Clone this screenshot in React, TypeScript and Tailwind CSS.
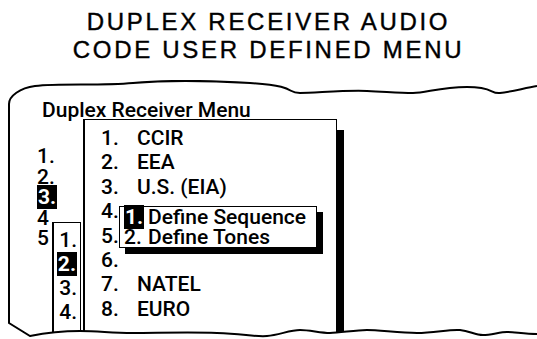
import React from 'react';

const mainItems = ['CCIR', 'EEA', 'U.S. (EIA)', '', '', '', 'NATEL', 'EURO'];
const rootItems = ['1.', '2.', '3.', '4', '5'];
const codeItems = ['1.', '2.', '3.', '4.'];
const defineItems = ['Define Sequence', 'Define Tones'];

const Num: React.FC<{ label: string; active?: boolean }> = ({ label, active }) => (
    <span className={active ? 'bg-black text-white px-[1px] font-bold' : ''}>{label}</span>
);

const App: React.FC = () => {
    return (
        <main className="w-[537px] h-[339px] bg-white text-black overflow-hidden">
            <div className="h-[80px] pt-[8px] flex flex-col items-center font-['Liberation_Sans',Arial,sans-serif] text-[24px] leading-[28px] tracking-[2.7px] [-webkit-text-stroke:0.4px_#000]">
                <span>DUPLEX RECEIVER AUDIO</span>
                <span>CODE USER DEFINED MENU</span>
            </div>

            <div className="relative h-[259px] font-['Roboto',sans-serif] font-medium text-[21px]">
                {/* root window */}
                <div className="absolute left-[37px] top-[18px] flex flex-col">
                    <div className="pl-[5px] leading-[24px]">Duplex Receiver Menu</div>
                    <div className="mt-[24px] flex flex-col leading-[20.5px]">
                        {rootItems.map((n, i) => (
                            <div key={n}>
                                <Num label={n} active={i === 2} />
                            </div>
                        ))}
                    </div>
                </div>

                {/* code list */}
                <div className="absolute left-[83px] top-[39px] w-[254px] h-[240px] bg-white border border-l-2 border-black shadow-[7px_11px_0_#000] pt-[6px] pl-[16px] leading-[24.4px]">
                    {mainItems.map((label, i) => (
                        <div key={i} className="flex">
                            <span className="w-[36px]">{i + 1}.</span>
                            <span>{label}</span>
                        </div>
                    ))}
                </div>

                {/* user defined submenu */}
                <div className="absolute left-[119px] top-[126px] w-[198px] bg-white border border-black shadow-[6px_6px_0_#000] pl-[4px] leading-[20px]">
                    {defineItems.map((label, i) => (
                        <div key={label} className="flex">
                            <span className="w-[24px]">
                                <Num label={`${i + 1}.`} active={i === 0} />
                            </span>
                            <span>{label}</span>
                        </div>
                    ))}
                </div>

                {/* code select */}
                <div className="absolute left-[52px] top-[142px] w-[29px] h-[130px] bg-white border border-l-2 border-black pt-[5px] pr-[3px] flex flex-col items-end leading-[24px]">
                    {codeItems.map((n, i) => (
                        <div key={n}>
                            <Num label={n} active={i === 1} />
                        </div>
                    ))}
                </div>

                {/* torn page edges */}
                <svg className="absolute inset-0 z-10" width="537" height="259" viewBox="0 80 537 259" fill="none">
                    <path
                        d="M 10 331 L 30 336 C 45 333, 60 331, 80 331 S 110 333, 133 333 S 190 332, 217 333 S 255 337, 267 336 S 290 330, 300 330 S 320 333, 330 333 S 355 330, 367 330 S 400 333, 417 333 S 450 329, 460 330 S 475 335, 483 335 S 500 332, 507 332 S 525 334, 537 334 L 540 345 L 0 345 L 0 323 Z"
                        fill="#fff"
                    />
                    <path
                        d="M 9 104 L 9 323 L 30 336 C 45 333, 60 331, 80 331 S 110 333, 133 333 S 190 332, 217 333 S 255 337, 267 336 S 290 330, 300 330 S 320 333, 330 333 S 355 330, 367 330 S 400 333, 417 333 S 450 329, 460 330 S 475 335, 483 335 S 500 332, 507 332 S 525 334, 537 334"
                        stroke="#000"
                        strokeWidth="2"
                    />
                    <path
                        d="M 9 104 C 9 96, 20 88, 35 86 C 60 83, 100 86, 133 83 S 200 80, 250 83 S 285 93, 300 93 S 345 90, 367 91 S 400 93, 413 93 S 440 87, 467 87 S 490 94, 500 93 S 525 88, 537 86"
                        stroke="#000"
                        strokeWidth="2"
                    />
                </svg>
            </div>
        </main>
    );
};

export default App;
